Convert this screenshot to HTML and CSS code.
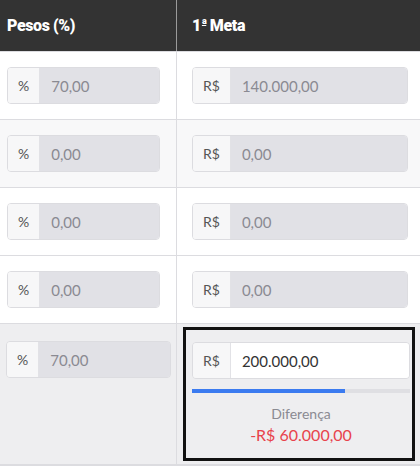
FILE: index.html
```html
<!DOCTYPE html>
<html lang="pt-BR">
<head>
  <meta charset="UTF-8">
  <title>Metas</title>
  <link rel="stylesheet" href="styles.css">
</head>
<body>
  <div class="table">
    <div class="row head">
      <div class="cell first">Pesos (%)</div>
      <div class="cell">1<sup class="ord">a</sup>&nbsp;Meta</div>
    </div>

    <div class="row">
      <div class="cell first">
        <div class="group"><span class="addon">%</span><input class="field" value="70,00" disabled></div>
      </div>
      <div class="cell">
        <div class="group"><span class="addon">R$</span><input class="field" value="140.000,00" disabled></div>
      </div>
    </div>

    <div class="row striped">
      <div class="cell first">
        <div class="group"><span class="addon">%</span><input class="field" value="0,00" disabled></div>
      </div>
      <div class="cell">
        <div class="group"><span class="addon">R$</span><input class="field" value="0,00" disabled></div>
      </div>
    </div>

    <div class="row">
      <div class="cell first">
        <div class="group"><span class="addon">%</span><input class="field" value="0,00" disabled></div>
      </div>
      <div class="cell">
        <div class="group"><span class="addon">R$</span><input class="field" value="0,00" disabled></div>
      </div>
    </div>

    <div class="row">
      <div class="cell first">
        <div class="group"><span class="addon">%</span><input class="field" value="0,00" disabled></div>
      </div>
      <div class="cell">
        <div class="group"><span class="addon">R$</span><input class="field" value="0,00" disabled></div>
      </div>
    </div>

    <div class="row total">
      <div class="cell first">
        <div class="group"><span class="addon">%</span><input class="field" value="70,00" disabled></div>
      </div>
      <div class="cell">
        <div class="goal">
          <div class="group"><span class="addon">R$</span><input class="field active" value="200.000,00"></div>
          <div class="bar"><div class="bar-fill" style="width: 70%"></div></div>
          <div class="diff-label">Diferença</div>
          <div class="diff-value">-R$ 60.000,00</div>
        </div>
      </div>
    </div>
  </div>
</body>
</html>
```

FILE: styles.css
```css
body { margin: 0; font-family: Lato, "Open Sans", Arial, sans-serif; background: #fff; overflow: hidden; }
.table { width: 420px; }
.row { display: grid; grid-template-columns: 177px minmax(0, 1fr); border-bottom: 1px solid #dcdce0; }
.cell { padding: 15px 12px 15px 15px; min-width: 0; }
.cell.first { padding: 15px 16px 15px 7px; border-right: 1px solid #dcdce0; }
.row.striped { background: #f8f8f9; }

.head { background: #333; border-bottom: 1px solid #dcdce0; }
.head .cell { height: 51px; box-sizing: border-box; padding-top: 0; padding-bottom: 0; display: flex; align-items: center; color: #fff; font-family: Roboto, Arial, sans-serif; font-weight: 900; font-size: 16px; letter-spacing: -0.4px; }
.head .cell.first { border-right-color: #9a9a9a; }
.ord { font-size: 9px; text-decoration: underline; align-self: flex-start; margin-top: 16px; margin-left: 1px; }

.group { display: flex; height: 37px; border: 1px solid #dcdce0; border-radius: 4px; overflow: hidden; box-sizing: border-box; }
.addon { display: flex; align-items: center; padding: 0 10px 0 10px; background: #f7f7f8; color: #555; font-size: 14px; border-right: 1px solid #e2e2e6; }
.field { flex: 1; width: 0; min-width: 0; border: none; padding: 0 11px; font-family: inherit; font-size: 15px; background: #e1e1e6; color: #8a8a92; }
.field.active { background: #fff; color: #333; }

.total { background: #eeeef0; border-bottom: 2px solid #dcdce0; }
.total .cell.first { padding-top: 17px; }
.total .cell { padding: 3px 5px 3px 6px; }
.goal { border: 3px solid #111; padding: 12px 2px 14px 6px; }
.bar { height: 4px; background: #dfdfe3; margin-top: 10px; }
.bar-fill { height: 100%; background: #3b7bf0; }
.diff-label { text-align: center; margin-top: 12px; color: #8a8a92; font-size: 14px; }
.diff-value { text-align: center; margin-top: 3px; color: #e8434c; font-size: 16px; }
```
